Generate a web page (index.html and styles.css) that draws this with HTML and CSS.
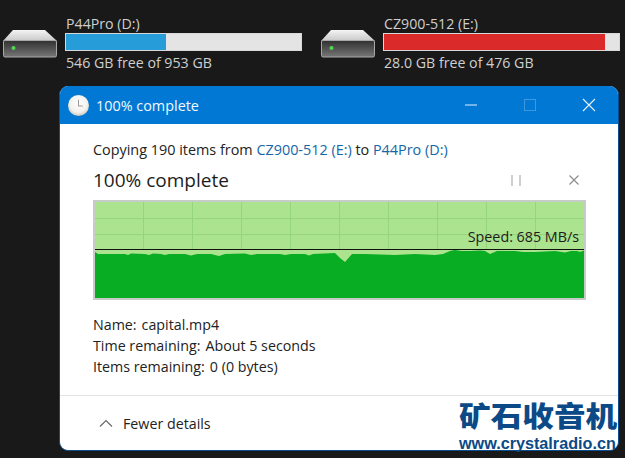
FILE: index.html
```html
<!DOCTYPE html>
<html lang="en">
<head>
<meta charset="utf-8">
<title>100% complete</title>
<link rel="stylesheet" href="styles.css">
</head>
<body>
<div class="drives">
  <div class="drive">
    <svg class="drive-icon" width="54" height="28" viewBox="0 0 54 28"><defs><linearGradient id="t1" x1="0" y1="0" x2="0" y2="1"><stop offset="0" stop-color="#f4f4f4"/><stop offset="1" stop-color="#c8c8c8"/></linearGradient><linearGradient id="b1" x1="0" y1="0" x2="0" y2="1"><stop offset="0" stop-color="#303030"/><stop offset="1" stop-color="#777"/></linearGradient></defs><path d="M10 0H42L54 11H0Z" fill="url(#t1)"/><rect x="0.500" y="10.500" width="53" height="16.500" rx="1.500" fill="url(#b1)" stroke="#a8a8a8"/><circle cx="10.500" cy="18" r="2" fill="#4fd84f"/></svg>
    <div class="drive-info">
      <div class="drive-name">P44Pro (D:)</div>
      <div class="bar"><div class="fill fill-blue" style="width:42.700%"></div></div>
      <div class="drive-free">546 GB free of 953 GB</div>
    </div>
  </div>
  <div class="drive">
    <svg class="drive-icon" width="54" height="28" viewBox="0 0 54 28"><path d="M10 0H42L54 11H0Z" fill="url(#t1)"/><rect x="0.500" y="10.500" width="53" height="16.500" rx="1.500" fill="url(#b1)" stroke="#a8a8a8"/><circle cx="10.500" cy="18" r="2" fill="#4fd84f"/></svg>
    <div class="drive-info">
      <div class="drive-name">CZ900-512 (E:)</div>
      <div class="bar"><div class="fill fill-red" style="width:94.100%"></div></div>
      <div class="drive-free">28.0 GB free of 476 GB</div>
    </div>
  </div>
</div>

<div class="window">
  <div class="titlebar">
    <svg class="clock" width="21" height="21" viewBox="0 0 20 20"><defs><radialGradient id="c1" cx="0.500" cy="0.400" r="0.600"><stop offset="0" stop-color="#fff"/><stop offset="0.700" stop-color="#f3f1ec"/><stop offset="1" stop-color="#cfcac0"/></radialGradient></defs><circle cx="10" cy="10" r="10" fill="url(#c1)"/><path d="M10 4.500V10.500H14" fill="none" stroke="#9a9a9a" stroke-width="1"/></svg>
    <span class="title">100% complete</span>
    <div class="controls">
      <svg width="14" height="14" viewBox="0 0 14 14"><path d="M1 7H13" stroke="#e6f1fb" stroke-width="1"/></svg>
      <svg width="14" height="14" viewBox="0 0 14 14"><rect x="1.500" y="1.500" width="11" height="11" fill="none" stroke="#3f97de"/></svg>
      <svg width="14" height="14" viewBox="0 0 14 14"><path d="M1 1L13 13M13 1L1 13" stroke="#eaf3fb" stroke-width="1.100"/></svg>
    </div>
  </div>
  <div class="content">
    <div class="copying">Copying 190 items from <span class="link">CZ900-512 (E:)</span> to <span class="link">P44Pro (D:)</span></div>
    <div class="heading-row">
      <div class="heading">100% complete</div>
      <div class="actions">
        <svg width="10" height="11" viewBox="0 0 10 11"><path d="M1 0V11M9 0V11" stroke="#c0c0c0" stroke-width="1.500"/></svg>
        <svg width="10" height="10" viewBox="0 0 10 10"><path d="M0.500 0.500L9.500 9.500M9.500 0.500L0.500 9.500" stroke="#8c8c8c" stroke-width="1.200"/></svg>
      </div>
    </div>
    <div class="graph">
      <svg width="489" height="96" viewBox="0 0 489 96">
        <rect width="489" height="96" fill="#abe38f"/>
        <path d="M48.500 0V47M97.500 0V47M146.500 0V47M195.500 0V47M244.500 0V47M293.500 0V47M342.500 0V47M391.500 0V47M440.500 0V47M0 16.500H489M0 32.500H489" stroke="#96d47e" fill="none"/>
        <path d="M0 50L3 52L30 52L33 53L36 51.500L50 52L54 53L58 51.500L66 52L70 53L74 52L90 52L96 53.500L102 52L116 52L124 54L130 52L150 51.500L156 53L162 52L185 52L190 53L196 52L210 52L214 53.500L218 52L240 51L245 56L250 60L257 52L270 52L300 53L320 52L340 53L348 52L355 49L360 48L366 49L375 49L385 48.500L390 49L395 52L402 49L420 49L428 50L440 50L460 49L470 50.500L476 49L482 49L485 50L489 48.500V96H0Z" fill="#08ad24"/>
        <path d="M0 47.500H489" stroke="#111" stroke-width="1"/>
      </svg>
      <span class="speed">Speed: 685 MB/s</span>
    </div>
    <div class="details">
      <div class="detail"><span>Name:</span><span>capital.mp4</span></div>
      <div class="detail"><span>Time remaining:</span><span>About 5 seconds</span></div>
      <div class="detail"><span>Items remaining:</span><span>0 (0 bytes)</span></div>
    </div>
  </div>
  <div class="footer">
    <svg width="14" height="8" viewBox="0 0 14 8"><path d="M1 7.500L7 1.500L13 7.500" fill="none" stroke="#666" stroke-width="1.100"/></svg>
    <span>Fewer details</span>
  </div>
</div>

<div class="watermark">
  <div class="wm-cn">矿石收音机</div>
  <div class="wm-url">www.crystalradio.cn</div>
</div>
</body>
</html>
```
FILE: styles.css
```css
* { box-sizing: border-box; }
html, body { margin: 0; height: 458px; overflow: hidden; }
body {
  background: #191919;
  font-family: "Open Sans", "Noto Sans", sans-serif;
  font-size: 14.400px;
  color: #222;
  position: relative;
}
.drives { display: flex; padding: 14px 0 0 3px; height: 86px; }
.drive { display: flex; width: 318px; flex: none; }
.drive-icon { margin: 16px 8px 0 0; flex: none; }
.drive-info { width: 237px; flex: none; }
.drive-name, .drive-free { color: #cfcfcf; padding-left: 1px; line-height: 19px; font-size: 14.200px; }
.bar { height: 18px; background: #e4e4e4; border: 1px solid #d8d8d8; margin-bottom: 2px; }
.fill { height: 100%; }
.fill-blue { background: #269cd9; }
.fill-red { background: #db2a2a; }
.window {
  margin-left: 59px;
  width: 560px;
  height: 365px;
  background: #fff;
  border-radius: 9px;
  overflow: hidden;
  border: 1px solid #0a4d8c;
  border-top: 0;
}
.titlebar { height: 38px; background: #0078d4; display: flex; align-items: center; padding-left: 9px; margin: 0 -1px; }
.clock { flex: none; }
.title { color: #f2f8fd; margin-left: 7px; }
.controls { margin-left: auto; display: flex; gap: 45px; padding-right: 23px; }
.content { padding: 15px 33px 0 33px; }
.copying { line-height: 21px; }
.link { color: #1466a6; }
.heading-row { display: flex; justify-content: space-between; align-items: center; margin-top: 5px; height: 30px; }
.heading { font-size: 19px; color: #1c1c1c; }
.actions { display: flex; align-items: center; gap: 48px; padding-right: 6px; }
.graph { position: relative; width: 493px; height: 100px; border: 2px solid #c8ccc8; margin-top: 5px; }
.graph svg { display: block; }
.speed { position: absolute; right: 5px; top: 25px; line-height: 20px; color: #1c1c1c; font-size: 14.300px; }
.details { margin-top: 14px; font-size: 14.250px; }
.detail { display: flex; gap: 5px; line-height: 21px; }
.footer {
  position: absolute; left: 60px; top: 395px; width: 558px; height: 55px;
  border-top: 1px solid #e3e3e3; display: flex; align-items: center; gap: 10px; padding-left: 39px; color: #222; font-size: 14.250px;
}
.watermark { position: absolute; left: 459px; top: 397px; width: 166px; }
.wm-cn { font-family: "Noto Sans CJK SC", sans-serif; font-weight: 900; font-size: 28px; line-height: 37px; color: #0b4a86; white-space: nowrap; transform: scaleX(1.130); transform-origin: left center; }
.wm-url { font-family: "Liberation Sans", sans-serif; font-weight: 700; font-size: 16.200px; line-height: 17px; margin-top: 1px; color: #0b4a86; white-space: nowrap; }
```
